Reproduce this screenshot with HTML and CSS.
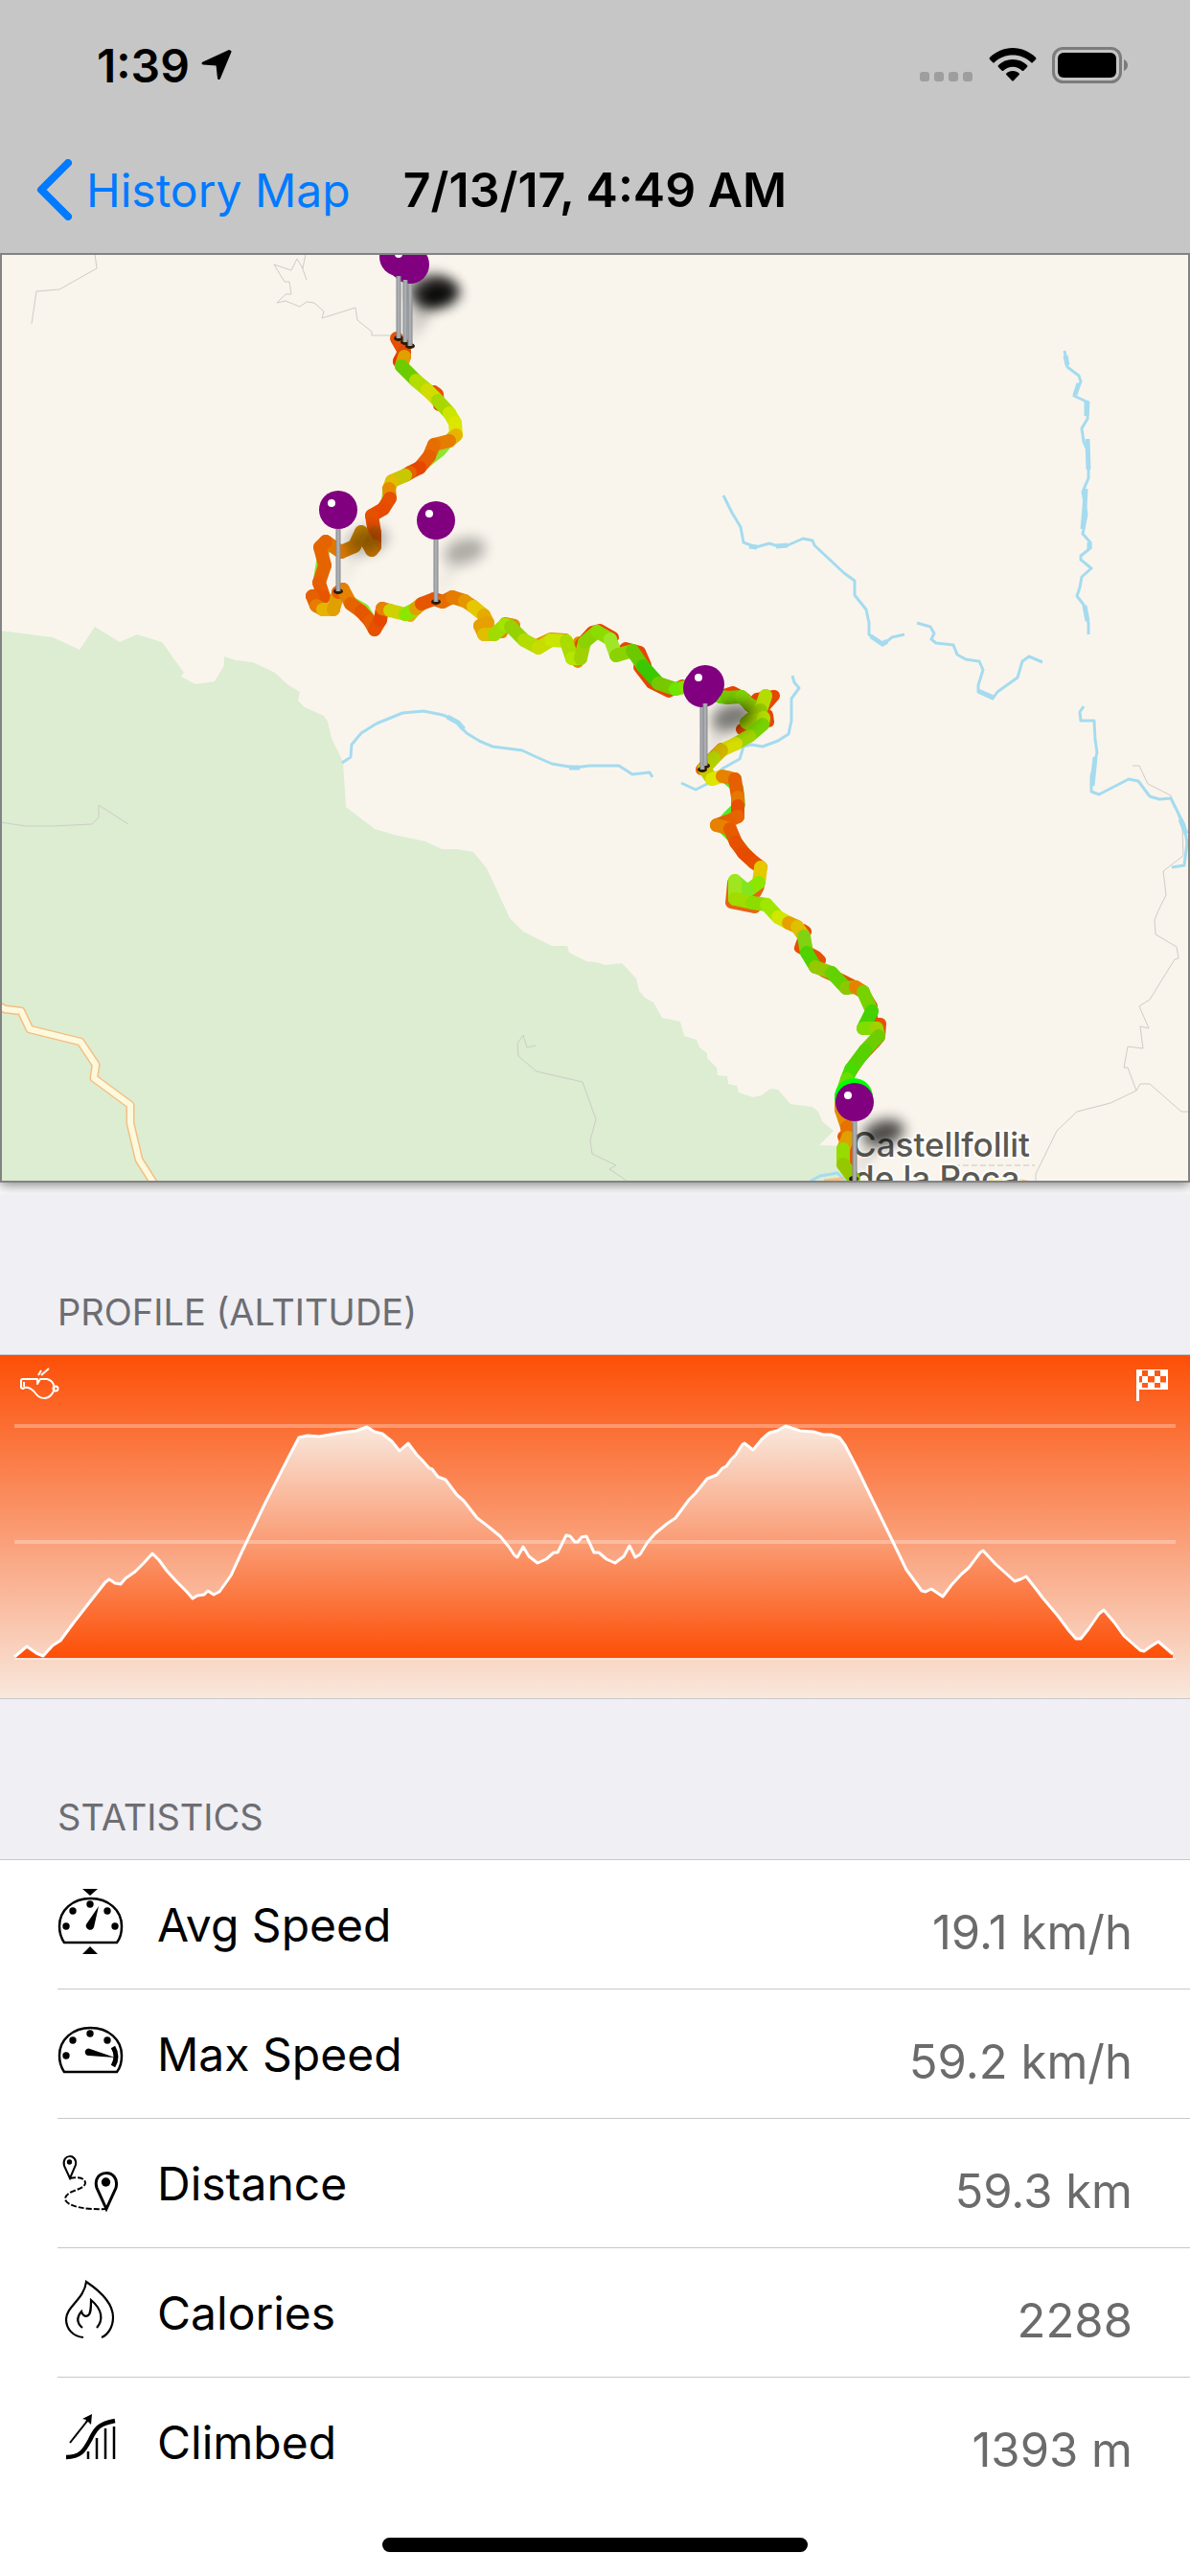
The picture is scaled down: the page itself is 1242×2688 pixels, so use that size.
FILE: index.html
```html
<!DOCTYPE html>
<html lang="en">
<head>
  <meta charset="UTF-8" />
  <meta name="viewport" content="width=device-width, initial-scale=1.0"/>
  <title>7/13/17, 4:49 AM</title>
  <link rel="stylesheet" href="styles.css">
</head>
<body>
  <header class="header">
    <div class="status-bar">
      <span class="time">1:39</span>
      <svg class="location" width="32" height="32" viewBox="0 0 32 32"><path d="M30 2 L18.500 29.500 L17 16 L16 15 L2 14 L29 1.500 Z" stroke="#000" stroke-width="3" stroke-linejoin="round"/></svg>
      <div class="status-icons">
        <svg width="56" height="36" viewBox="0 0 56 36" fill="#9e9e9e">
          <rect x="0" y="25" width="10" height="10" rx="3"/>
          <rect x="15" y="25" width="10" height="10" rx="3"/>
          <rect x="30" y="25" width="10" height="10" rx="3"/>
          <rect x="45" y="25" width="10" height="10" rx="3"/>
        </svg>
        <svg width="50" height="36" viewBox="0 0 50 36">
          <path d="M25 0 C34 0 43 4 49 10 Q50 11 49 12 L46 15 Q45 16 44 15 C39 10 32 7.500 25 7.500 S11 10 6 15 Q5 16 4 15 L1 12 Q0 11 1 10 C7 4 16 0 25 0 Z"/>
          <path d="M25 12 C31 12 36 14 40 18 Q41 19 40 20 L36.500 23.500 Q35.500 24.500 34.500 23.500 C32 21 28.500 19.700 25 19.700 S18 21 15.500 23.500 Q14.500 24.500 13.500 23.500 L10 20 Q9 19 10 18 C14 14 19 12 25 12 Z"/>
          <path d="M25 24 C28 24 30 25 31.500 26.300 Q32.500 27.300 31.500 28.300 L26 34 Q25 35 24 34 L18.500 28.300 Q17.500 27.300 18.500 26.300 C20 25 22 24 25 24 Z"/>
        </svg>
        <svg width="80" height="38" viewBox="0 0 80 38">
          <rect x="1.500" y="1.500" width="70" height="35" rx="10" fill="none" stroke="#7c7c7c" stroke-width="3"/>
          <rect x="6" y="6" width="61" height="26" rx="6"/>
          <path d="M75 13 Q79 15 79 19 T75 25 Z" fill="#7c7c7c"/>
        </svg>
      </div>
    </div>
    <nav class="navbar">
      <a class="back" href="#">
        <svg width="37" height="64" viewBox="0 0 37 64"><path d="M33 4 L5 32 L33 60" fill="none" stroke="#007aff" stroke-width="8" stroke-linecap="round" stroke-linejoin="round"/></svg>
        History Map
      </a>
      <h1>7/13/17, 4:49 AM</h1>
    </nav>
  </header>

  <div class="map-wrap">
    <svg class="map" viewBox="0 264 1242 970">
      <defs>
        <filter id="blur" x="-60%" y="-80%" width="220%" height="260%"><feGaussianBlur stdDeviation="7"/></filter>
        <linearGradient id="pole"><stop offset="0" stop-color="#85878b"/><stop offset=".5" stop-color="#b4b7bb"/><stop offset="1" stop-color="#85878b"/></linearGradient>
      </defs>
      <rect y="264" width="1242" height="970" fill="#f9f5ed"/>
      <!-- park -->
      <path fill="#dcedd2" d="M0 658 L55 665 83 678 99 654 125 670 143 662 169 670 192 702 189 706 204 714 224 711 234 694 234 685 246 689 264 691 287 702 301 715 313 722 311 731 318 738 338 747 342 753 346 770 358 795 361 842 391 865 411 871 444 878 461 886 476 886 494 889 508 906 521 934 532 958 546 972 576 987 592 987 594 994 612 1003 622 1004 632 1007 649 1005 664 1021 667 1034 673 1041 682 1046 691 1062 710 1066 714 1081 727 1085 730 1093 738 1099 738 1104 748 1114 749 1122 759 1123 760 1131 769 1133 771 1140 786 1145 795 1143 804 1136 812 1137 825 1152 848 1155 854 1160 858 1170 870 1180 855 1195 882 1196 888 1234 0 1234 Z"/>
      <!-- small roads -->
      <g fill="none" stroke="#cfcbc6" stroke-width="1">
        <path d="M0 858 L27 862 55 862 96 860 103 853 103 840 134 860"/>
        <path d="M99 265 L101 280 62 302 38 304 33 338"/>
        <path d="M319 265 L316 280 310 270 304 282 286 276 297 294 302 294 304 307 298 307 289 316 298 314 313 320 320 315 328 316 338 325 336 332 371 321 373 334 388 346 388 350 408 350 412 353 M315 278 L320 292"/>
        <path d="M1182 799 L1189 799 1198 818 1222 830 1234 863 1235 893 1214 909 1217 934 1209 950 1205 960 1206 975 1228 988 1230 1000 1226 1001 1200 1043 1189 1050 1199 1073 1190 1071 1193 1094 1177 1092 1173 1114 1177 1114 1186 1138 1159 1151 1124 1160 1103 1180 1081 1225 1081 1234"/>
        <path d="M1186 1138 L1190 1131 1200 1131 1233 1160 1242 1160"/>
        <path d="M559 1091 L550 1093 546 1080 540 1089 541 1102 560 1118 608 1129 622 1168 616 1190 618 1204 643 1216 636 1220 654 1232"/>
      </g>
      <!-- rivers -->
      <g fill="none" stroke="#a5dbef" stroke-width="3" stroke-linejoin="round">
        <path d="M357 796 L366 790 367 777 377 765 393 755 420 744 442 742 462 746 474 751 487 765 500 773 514 779 545 783 560 790 576 797 600 801 615 799 646 799 660 808 678 806 681 811"/>
        <path d="M711 817 L726 824 738 818 754 802 772 792 776 779 784 777 796 779 812 773 823 766 826 752 826 729 834 718 829 712 827 705"/>
        <path d="M755 517 L764 535 773 550 776 566 789 571 803 567 812 570 822 569 838 562 848 564 850 569 881 598 892 606 892 621 904 636 907 650 907 662 921 673 931 665 944 662"/>
        <path d="M957 650 L971 654 975 661 972 667 977 671 995 673 999 683 1008 688 1022 690 1026 699 1021 715 1021 722 1036 729 1041 722 1062 707 1067 690 1074 685 1088 691"/>
        <path d="M1111 366 L1114 383 1126 392 1128 398 1121 413 1136 420 1135 437 1129 447 1131 461 1136 472 1136 499 1130 513 1132 525 1134 537 1130 557 1138 566 1138 572 1128 580 1128 584 1139 593 1129 602 1127 613 1124 622 1131 631 1136 650 1136 662"/>
        <path d="M1131 737 L1127 743 1128 752 1142 752 1143 772 1145 785 1139 810 1139 826 1147 829 1178 813 1188 815 1200 831 1210 834 1222 833 1236 861 1239 880 1236 903 1223 905"/>
        <path d="M845 1233 L856 1227 874 1224 882 1232"/>
        <path stroke-width="5" d="M467 748 L478 754 484 761 M594 801 L605 801 M782 570 L790 571 M810 570 L822 569 M1112 371 L1114 381 M1126 400 L1122 412 M1134 418 L1134 434 M1135 458 L1136 490 M1133 510 L1132 530 1130 552 M909 664 L921 672 926 669 M1021 721 L1037 728 M1137 566 L1137 573 M1132 632 L1135 648 M1143 790 L1140 820 M1232 855 L1238 870"/>
      </g>
      <!-- main road -->
      <g fill="none" stroke-linejoin="round">
        <path stroke="#f5be82" stroke-width="9" d="M-4 1048 L5 1053 22 1055 31 1074 84 1087 100 1111 98 1125 136 1153 136 1172 145 1210 164 1240"/>
        <path stroke="#fdf9dd" stroke-width="6" d="M-4 1048 L5 1053 22 1055 31 1074 84 1087 100 1111 98 1125 136 1153 136 1172 145 1210 164 1240"/>
        <path stroke="#f5be82" stroke-width="3" d="M860 1232 L880 1230 M1060 1231 L1076 1234"/>
        <path stroke="#faeeb4" stroke-width="6" d="M1020 1233 L1050 1228 1066 1234"/>
      </g>
      <path d="M996 1216 H1080" stroke="#cbc6bf" stroke-dasharray="6 3"/>
      <text class="place" x="889" y="1207">Castellfollit</text>
      <text class="place" x="891" y="1242">de la Roca</text>
      <g id="route" class="route"></g>
      <g id="pins"></g>
      <rect x="1" y="265" width="1240" height="968" fill="none" stroke="#838383" stroke-width="2"/>
    </svg>
  </div>

  <section>
    <h2>PROFILE (ALTITUDE)</h2>
    <svg class="chart" viewBox="0 0 1242 358">
      <defs>
        <linearGradient id="area" gradientUnits="userSpaceOnUse" x1="0" y1="74" x2="0" y2="316">
          <stop offset="0" stop-color="#f9e8dd"/><stop offset=".5" stop-color="#fa9c74"/><stop offset="1" stop-color="#fd4f07"/>
        </linearGradient>
      </defs>
      <path id="altitudeArea" fill="url(#area)"/>
      <g stroke="#fff" stroke-opacity=".3" stroke-width="4">
        <path d="M15 74 H1227 M15 195 H1227"/>
      </g>
      <path d="M15 317 H1227" stroke="#fbe5da" stroke-width="2"/>
      <path id="altitudeLine" fill="none" stroke="#fff" stroke-width="3" stroke-linejoin="round"/>
      <!-- whistle -->
      <g fill="none" stroke="#fff" stroke-width="2" stroke-linejoin="round">
        <path d="M39 25 H23 L22 26 V34 L24 35 C30 31 35 37 38 41 C42 46 49 46 53 42 C59 36 57 27 49 25 H42 L39 30 Z M25 28 V33"/>
        <circle cx="58" cy="35" r="2.500"/>
        <path d="M40 21 L43 16 M43 21 L51 14"/>
      </g>
      <!-- finish flag -->
      <g fill="#fff">
        <rect x="1186" y="15" width="3" height="33"/>
        <path d="M1186 15 H1219 V36 H1186 Z M1192 16 V22 H1198 V16 Z M1205 16 V22 H1211 V16 Z M1189 22 V28.500 H1192 V22 Z M1198 22 V28.500 H1205 V22 Z M1211 22 V28.500 H1217 V22 Z M1192 29 V34 H1198 V29 Z M1205 29 V34 H1211 V29 Z" fill-rule="evenodd"/>
      </g>
    </svg>
  </section>

  <section class="statistics">
    <h2>STATISTICS</h2>
    <ul class="stats">
      <li>
        <svg class="icon" viewBox="0 0 72 72">
          <path d="M7 55 C3 49 2 44 2 38 C2 21 16 9 34.500 9 S67 21 67 38 C67 44 66 50 62 55 Z" fill="none" stroke="#000" stroke-width="2.500"/>
          <path d="M26 -1 H42 L34 6 Z M26 67 H42 L34 59 Z M43 17 L38 39 A4 4 0 1 1 30 36 Z"/>
          <circle cx="9" cy="38" r="3.700"/><circle cx="16" cy="22" r="3.700"/><circle cx="34" cy="15" r="3.700"/><circle cx="52" cy="22" r="3.700"/><circle cx="60" cy="38" r="3.700"/>
        </svg>
        <span class="label">Avg Speed</span><span class="value">19.1 km/h</span>
      </li>
      <li>
        <svg class="icon" viewBox="0 0 72 72">
          <path d="M7 55 C3 49 2 44 2 38 C2 21 16 9 34.500 9 S67 21 67 38 C67 44 66 50 62 55 Z" fill="none" stroke="#000" stroke-width="2.500"/>
          <path d="M60 40 L34 31 A3.700 3.700 0 1 0 33 38 Z"/>
          <path d="M58 29 Q64 39 58 49" fill="none" stroke="#000" stroke-width="5"/>
          <circle cx="9" cy="38" r="3.700"/><circle cx="16" cy="22" r="3.700"/><circle cx="34" cy="15" r="3.700"/><circle cx="52" cy="22" r="3.700"/>
        </svg>
        <span class="label">Max Speed</span><span class="value">59.2 km/h</span>
      </li>
      <li>
        <svg class="icon" viewBox="0 0 72 72">
          <g fill="none" stroke="#000" stroke-width="2">
            <path d="M13 31 L7 18 C4 5 21 5 19 17 Z"/>
            <path d="M13 31 C22 29 29 31 29 36 C28 44 8 43 8 53 C10 61 32 64 51 63" stroke-dasharray="6 2"/>
            <path d="M51 63 L41 41 C35 21 66 20 61 41 Z" stroke-width="3"/>
          </g>
          <circle cx="12.500" cy="14" r="2.700"/><circle cx="50.500" cy="35" r="4.700"/>
        </svg>
        <span class="label">Distance</span><span class="value">59.3 km</span>
      </li>
      <li>
        <svg class="icon" viewBox="0 0 72 72">
          <g fill="none" stroke="#000" stroke-width="2.200">
            <path d="M27 62 C16 61 9 53 9 43 C9 30 28 22 30 4 C45 14 58 27 58 41 C58 51 53 59 46 62"/>
            <path d="M26 52 C20 47 20 41 25 35 C26 39 29 41 32 39 C35 37 35 31 35 23 C47 33 48 44 41 52"/>
          </g>
        </svg>
        <span class="label">Calories</span><span class="value">2288</span>
      </li>
      <li>
        <svg class="icon" viewBox="0 0 72 72">
          <g fill="none" stroke="#000">
            <path d="M9 51 C24 51 28 44 34 33 C40 20 44 16 60 13" stroke-width="4.500"/>
            <path d="M32 45 V53 M41 31 V53 M50 21 V53 M59 19 V53" stroke-width="2.500"/>
            <path d="M13 36 L32 12" stroke-width="2"/>
          </g>
          <path d="M36 6 L26 11 L30 12 L29 15 L32 14 L35 17 Z"/>
        </svg>
        <span class="label">Climbed</span><span class="value">1393 m</span>
      </li>
    </ul>
  </section>
  <div class="home-indicator"></div>

  <script src="script.js"></script>
</body>
</html>
```
FILE: styles.css
```css
* {
  margin: 0;
  padding: 0;
  box-sizing: border-box;
}

body {
  font-family: Inter, "Liberation Sans", sans-serif;
  background-color: #efeff4;
  color: #000;
  min-height: 100vh;
  display: flex;
  flex-direction: column;
}

svg {
  display: block;
}

.header {
  background-color: #c6c6c6;
}

.status-bar {
  display: flex;
  align-items: center;
  height: 132px;
  padding: 4px 64px 0 101px;
}

.time {
  font-size: 48px;
  font-weight: 600;
}

.location {
  margin-left: 12px;
}

.status-icons {
  display: flex;
  align-items: center;
  gap: 16px;
  margin-left: auto;
}

.navbar {
  display: grid;
  grid-template-columns: 1fr auto 1fr;
  align-items: center;
  height: 132px;
  padding: 0 38px;
}

.back {
  display: flex;
  align-items: center;
  gap: 15px;
  color: #007aff;
  font-size: 48px;
  white-space: nowrap;
  text-decoration: none;
}

.navbar h1 {
  font-size: 50px;
  font-weight: 600;
}

.map-wrap {
  background-color: #fafafa;
  padding-bottom: 12px;
  overflow: hidden;
}

.map {
  width: 100%;
  height: auto;
  box-shadow: 0 2px 12px rgba(0, 0, 0, 0.5);
}

.route line {
  stroke-width: 14;
  stroke-linecap: round;
}

.route .under {
  fill: none;
  stroke-width: 12;
  stroke-linecap: round;
  stroke-linejoin: round;
}

.place {
  font-size: 35px;
  font-weight: 500;
  fill: #5b5951;
  stroke: #fff;
  stroke-width: 4px;
  stroke-linejoin: round;
  paint-order: stroke;
}

h2 {
  display: flex;
  align-items: flex-end;
  height: 167px;
  padding: 0 60px 20px;
  font-size: 38px;
  line-height: 48px;
  font-weight: 400;
  color: #6d6d72;
}

.chart {
  width: 100%;
  height: auto;
  border-top: 1px solid #c8c7cc;
  border-bottom: 1px solid #c8c7cc;
  background: linear-gradient(#fd4f07, #fa9c74 52%, #f9e8dd);
}

.statistics {
  flex: 1;
  display: flex;
  flex-direction: column;
}

.stats {
  flex: 1;
  list-style: none;
  background-color: #fff;
  border-top: 1px solid #c8c7cc;
  padding-left: 60px;
}

.stats li {
  display: flex;
  align-items: center;
  height: 135px;
  padding-right: 60px;
  border-bottom: 1px solid #c8c7cc;
}

.stats li:last-child {
  border-bottom: none;
}

.icon {
  width: 72px;
  height: 72px;
  margin-right: 32px;
  overflow: visible;
}

.label {
  font-size: 48px;
}

.value {
  margin-left: auto;
  padding-top: 16px;
  font-size: 49px;
  color: #6b6b6b;
}

.home-indicator {
  position: fixed;
  bottom: 25px;
  left: 50%;
  width: 444px;
  height: 15px;
  margin-left: -222px;
  border-radius: 8px;
  background-color: #000;
}
```
FILE: script.js
```js
const svgNS = 'http://www.w3.org/2000/svg';

// outward leg, partly covered by the return leg
const under = [
  ['#e65000', '453,408 457,411 458,423'],
  ['#8ee630', '475,452 460,470 440,486 425,496'],
  ['#8ee630', '406,508 403,528 392,536'],
  ['#8ee630', '338,575 335,592 333,605'],
  ['#8ee630', '366,628 380,636 386,646'],
  ['#e6b400', '423,641 428,643 434,636'],
  ['#e08c00', '505,660 524,660 527,650 537,652'],
  ['#e68c00', '562,672 575,666 590,667 597,686 603,691 604,670'],
  ['#e64600', '606,672 618,659 626,657 640,665'],
  ['#e64600', '645,684 653,676 668,680 674,694 667,696 680,713 698,722 712,715'],
  ['#e64600', '750,727 765,722 778,729 782,737 790,729 808,726 794,742 801,746 802,753 774,761'],
  ['#e65a00', '753,781 738,796 732,803'],
  ['#5ae628', '757,811 770,822 772,840 760,852 752,861 765,874 782,895'],
  ['#e66414', '792,925 789,931 778,931'],
  ['#e66414', '765,921 763,942 788,947'],
  ['#e65000', '838,970 841,972 835,989 852,998 856,1002 853,1008 860,1014 876,1021 890,1028 900,1034 910,1050 910,1066'],
  ['#e65000', '903,1074 915,1068 919,1068 918,1082 912,1089 896,1106 886,1122'],
  ['#e65a00', '880,1186 886,1200 886,1222']
];

// x, y, colour of the stretch that starts there
const route = [
  [414, 353, '#e65000'], [422, 367, '#e04b00'], [417, 377, '#e03c00'], [422, 372, '#e0a000'],
  [419, 382, '#6ccc00'], [434, 397, '#b4dc00'], [446, 407, '#d2dc00'], [457, 418, '#a8d800'],
  [469, 431, '#cce600'], [475, 441, '#dce600'], [476, 454, '#e6b400'], [469, 460, '#e67d00'],
  [453, 464, '#e66e00'], [448, 476, '#e65f00'], [438, 488, '#e64600'], [428, 493, '#e06400'],
  [423, 496, '#c8c800'], [409, 502, '#e0be00'], [406, 510, '#e68c00'], [407, 520, '#e65000'],
  [400, 531, '#e64b00'], [388, 538, '#e65000'], [391, 556, '#cd5500'], [391, 570, '#c86e00'],
  [388, 574, '#c87800'], [377, 555, '#c88200'], [370, 570, '#cd7d00'], [356, 576, '#e07800'],
  [340, 565, '#e66400'], [334, 571, '#e66400'], [339, 590, '#e66400'], [333, 608, '#e65f00'],
  [338, 623, '#e65500'], [326, 622, '#e65f00'], [330, 632, '#e67d00'], [337, 636, '#e6b400'],
  [348, 636, '#e0a000'], [353, 618, '#e65f00'], [358, 615, '#e68200'], [366, 630, '#e66400'],
  [377, 638, '#e65500'], [386, 648, '#e65f00'], [391, 657, '#e65000'], [397, 647, '#e64600'],
  [399, 635, '#e68200'], [407, 637, '#cdd200'], [423, 641, '#8ce600'], [434, 635, '#e0a000'],
  [440, 630, '#e65500'], [453, 625, '#e65500'], [462, 628, '#e66e00'], [472, 623, '#e67d00'],
  [485, 627, '#e69600'], [494, 633, '#e6c800'], [505, 642, '#e6aa00'], [509, 650, '#e6a000'],
  [501, 653, '#e6a000'], [505, 662, '#e0be00'], [516, 662, '#a0dc00'], [527, 652, '#a0e600'],
  [533, 654, '#96d200'], [547, 668, '#b4dc00'], [562, 676, '#c8dc00'], [575, 668, '#c8e600'],
  [591, 669, '#aadc00'], [597, 687, '#b4e600'], [606, 687, '#a0d200'], [610, 670, '#8cd200'],
  [623, 659, '#8cdc00'], [637, 667, '#a0e628'], [643, 684, '#8cd200'], [660, 679, '#6ec800'],
  [671, 695, '#3cc800'], [687, 713, '#78c800'], [705, 719, '#6ee600'], [715, 717, '#8cdc00'],
  [735, 717, '#6ed200'], [752, 727, '#6edc00'], [759, 728, '#78c800'], [774, 727, '#82d200'],
  [782, 735, '#8cc800'], [794, 740, '#96d200'], [799, 726, '#b4dc00'], [794, 741, '#96c800'],
  [779, 754, '#a0d200'], [797, 749, '#b4dc00'], [796, 756, '#78d200'], [782, 768, '#a0d200'],
  [768, 776, '#d7dc00'], [753, 783, '#d2b400'], [745, 791, '#b4d200'], [735, 802, '#c8c800'],
  [743, 813, '#dce600'], [754, 810, '#e68200'], [767, 813, '#e65f00'], [770, 832, '#e67800'],
  [770, 841, '#e65000'], [770, 852, '#e66400'], [760, 857, '#e65f00'], [748, 861, '#e68200'],
  [762, 865, '#e65a00'], [768, 879, '#e65000'], [776, 890, '#e64b00'], [787, 900, '#e65000'],
  [794, 905, '#e6c800'], [792, 921, '#8ce600'], [780, 930, '#82e61e'], [767, 919, '#a0e61e'],
  [767, 938, '#a0dc00'], [785, 942, '#8cdc00'], [800, 944, '#a0e600'], [812, 957, '#d2e600'],
  [823, 963, '#e6a000'], [832, 967, '#e0be00'], [839, 977, '#82d214'], [842, 994, '#50d200'],
  [851, 1009, '#96c800'], [868, 1015, '#64d200'], [883, 1031, '#8cc800'], [893, 1030, '#e68200'],
  [901, 1035, '#78d200'], [910, 1055, '#46d200'], [901, 1073, '#82dc00'], [915, 1073, '#a0d200'],
  [917, 1081, '#6ecd00'], [903, 1096, '#55d200'], [888, 1116, '#46dc00'], [884, 1126, '#6edc00'],
  [878, 1144, '#e68200'], [878, 1158, '#e68c00'], [884, 1176, '#e67300'], [885, 1187, '#e0a000'],
  [880, 1199, '#96dc00'], [880, 1215, '#96c800'], [891, 1230, '#82a000']
];

// x, y of the pin foot, shadow strength, head colour
const pins = [
  [416, 353, 0.5, '#800080'], [428, 361, 0.9, '#800080'], [423, 357, 0.5, '#800080'],
  [353, 617, 0.3, '#800080'], [455, 628, 0.3, '#800080'],
  [733, 803, 0.3, '#800080'], [736, 799, 0.3, '#800080'],
  [891, 1230, 0, '#00ff00'], [892, 1235, 0.7, '#800080']
];

const altitude = [
  [15, 315], [28, 304], [38, 311], [45, 314], [55, 303], [63, 298], [77, 279], [95, 256], [110, 237],
  [114, 234], [120, 238], [126, 239], [131, 233], [141, 226], [150, 217], [159, 207], [166, 214],
  [174, 225], [184, 236], [195, 247], [201, 254], [206, 251], [213, 250], [217, 246], [223, 250],
  [229, 247], [241, 230], [253, 204], [277, 154], [301, 107], [312, 86], [321, 84], [333, 85],
  [356, 81], [372, 79], [383, 75], [391, 80], [399, 82], [409, 90], [417, 100], [426, 92], [435, 104],
  [440, 109], [448, 118], [451, 119], [457, 127], [465, 130], [477, 146], [484, 152], [498, 170],
  [511, 180], [522, 189], [531, 200], [537, 209], [540, 211], [546, 200], [552, 210], [561, 217],
  [570, 213], [578, 206], [582, 206], [591, 188], [595, 189], [600, 195], [603, 195], [607, 190],
  [612, 189], [620, 206], [625, 206], [633, 213], [642, 217], [651, 210], [657, 199], [663, 211],
  [668, 208], [676, 195], [684, 186], [696, 176], [705, 170], [719, 151], [726, 144], [738, 129],
  [748, 125], [754, 118], [758, 116], [763, 109], [768, 104], [775, 93], [777, 92], [786, 99],
  [795, 88], [803, 81], [811, 79], [820, 74], [835, 79], [849, 80], [859, 83], [867, 83], [876, 86],
  [882, 94], [894, 117], [910, 150], [932, 195], [946, 224], [962, 246], [966, 247], [972, 244],
  [984, 252], [993, 240], [1003, 229], [1011, 222], [1023, 206], [1026, 204], [1039, 218],
  [1059, 236], [1065, 234], [1071, 231], [1082, 245], [1088, 253], [1104, 272], [1116, 288],
  [1123, 296], [1128, 296], [1136, 286], [1147, 270], [1152, 266], [1163, 279], [1173, 293],
  [1190, 308], [1194, 309], [1201, 304], [1209, 299], [1224, 312]
];

function add(parent, name, attrs) {
  const el = document.createElementNS(svgNS, name);
  for (const key in attrs) {
    el.setAttribute(key, attrs[key]);
  }
  parent.appendChild(el);
}

function drawRoute() {
  const group = document.getElementById('route');
  under.forEach(([color, points]) => {
    add(group, 'polyline', { class: 'under', points: points, stroke: color });
  });
  for (let i = 0; i < route.length - 1; i++) {
    const [x1, y1, color] = route[i];
    const [x2, y2] = route[i + 1];
    add(group, 'line', { x1, y1, x2, y2, stroke: color });
  }
}

function drawPins() {
  const group = document.getElementById('pins');
  pins.forEach(([x, y, shadow]) => {
    add(group, 'ellipse', {
      cx: x + 30, cy: y - 53, rx: 22, ry: 13, opacity: shadow, filter: 'url(#blur)',
      transform: `rotate(-15 ${x + 30} ${y - 53})`
    });
    add(group, 'path', {
      d: `M${x} ${y} L${x + 12} ${y - 42} L${x + 26} ${y - 42} Z`,
      opacity: shadow / 4, filter: 'url(#blur)'
    });
  });
  pins.forEach(([x, y]) => add(group, 'ellipse', { cx: x, cy: y, rx: 5, ry: 3, fill: '#2a1a08' }));
  pins.forEach(([x, y, shadow, color]) => {
    add(group, 'circle', { cx: x, cy: y - 85, r: 20, fill: color });
    add(group, 'circle', { cx: x - 7, cy: y - 92, r: 4, fill: color === '#800080' ? '#fff' : color });
  });
  pins.forEach(([x, y]) => {
    if (y !== 1230) {
      add(group, 'rect', { x: x - 2.5, y: y - 65, width: 5, height: 65, fill: 'url(#pole)' });
    }
  });
}

function drawAltitude() {
  const line = 'M' + altitude.map(p => p.join(' ')).join(' L');
  document.getElementById('altitudeLine').setAttribute('d', line);
  document.getElementById('altitudeArea').setAttribute('d', line + ' V316 H15 Z');
}

drawRoute();
drawPins();
drawAltitude();
```
